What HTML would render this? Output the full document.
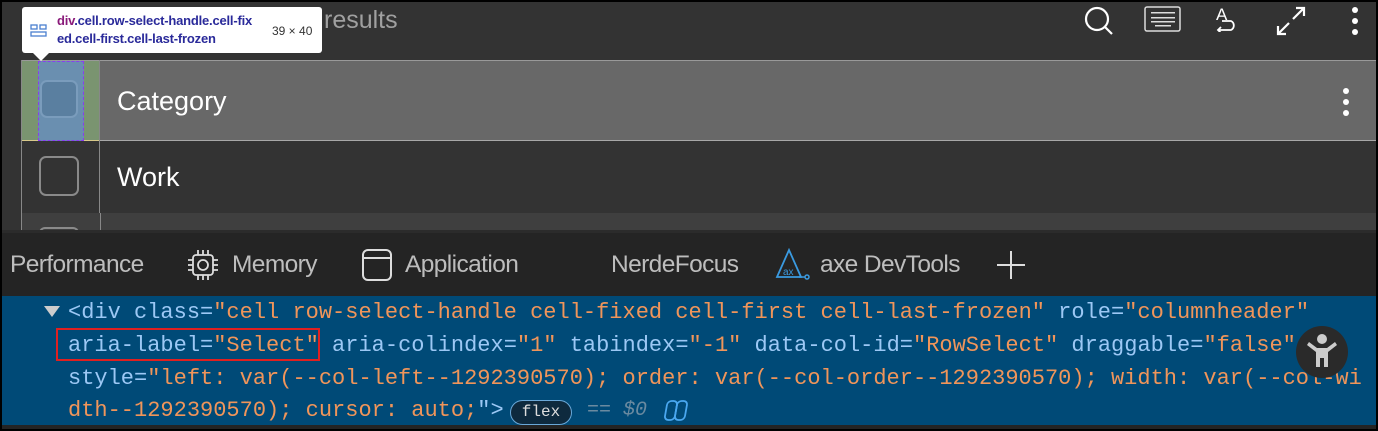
<!DOCTYPE html>
<html><head><meta charset="utf-8"><style>
*{margin:0;padding:0;box-sizing:border-box}
body{width:1378px;height:431px;overflow:hidden;background:#000;font-family:"Liberation Sans",sans-serif;position:relative}
.abs{position:absolute}
.code{font-family:"Liberation Mono",monospace;font-size:22px;color:#9cc8f5;white-space:pre;letter-spacing:0}
.o{color:#f0955a}
.tab{font-size:24.5px;color:#bdbdbd;top:251px;letter-spacing:-0.6px}
</style></head><body>
<div class="abs" style="left:2px;top:2px;width:1374px;height:228px;background:#333"></div>
<div class="abs" style="left:324px;top:6px;font-size:25px;color:#a0a0a0">results</div>
<!-- header row -->
<div class="abs" style="left:21px;top:60px;width:1355px;height:81px;background:#686868;border-top:1px solid #999;border-bottom:1px solid #a8a8a8"></div>
<div class="abs" style="left:21px;top:61px;width:78px;height:80px;background:#7a9470;border-bottom:1px solid #d8c98a"></div>
<div class="abs" style="left:38px;top:61px;width:46px;height:80px;background:#6a8fb0;border:1px dashed #8a3cf0"></div>
<div class="abs" style="left:40px;top:80px;width:38px;height:38px;border-radius:7px;background:#5a7fa0;border:2px solid #7a9cbc"></div>
<div class="abs" style="left:99px;top:60px;width:1px;height:172px;background:#888"></div>
<div class="abs" style="left:21px;top:60px;width:1px;height:172px;background:#888"></div>
<div class="abs" style="left:117px;top:86px;font-size:27px;color:#fff">Category</div>
<div class="abs" style="left:1343px;top:88px;width:6px;height:6px;border-radius:3px;background:#fff;box-shadow:0 11px 0 #fff,0 22px 0 #fff"></div>
<!-- work row -->
<div class="abs" style="left:39px;top:156px;width:40px;height:40px;border-radius:7px;border:2px solid #8a8a8a"></div>
<div class="abs" style="left:117px;top:162px;font-size:27px;color:#fff">Work</div>
<div class="abs" style="left:22px;top:213px;width:1354px;height:17px;background:#3f3f3f"></div>
<div class="abs" style="left:100px;top:213px;width:1px;height:17px;background:#888"></div>
<div class="abs" style="left:39px;top:227px;width:40px;height:6px;border:2px solid #8a8a8a;border-bottom:none;border-radius:7px 7px 0 0"></div>
<!-- top icons -->
<svg class="abs" style="left:1080px;top:3px" width="40" height="34" viewBox="0 0 40 34"><circle cx="17" cy="16" r="11" fill="none" stroke="#fff" stroke-width="2.2"/><line x1="25" y1="24" x2="32" y2="31" stroke="#fff" stroke-width="2.2"/></svg>
<svg class="abs" style="left:1144px;top:6px" width="38" height="27" viewBox="0 0 38 27"><rect x="1" y="1" width="35" height="24" rx="2" fill="none" stroke="#ddd" stroke-width="1.5"/><g fill="#ddd"><rect x="7" y="6" width="24" height="1.5"/><rect x="7" y="11" width="24" height="1.5"/><rect x="7" y="15" width="24" height="1.5"/><rect x="11" y="19" width="16" height="1.5"/></g></svg>
<div class="abs" style="left:1216px;top:5px;font-size:17px;color:#fff">A</div>
<svg class="abs" style="left:1214px;top:18px" width="26" height="14" viewBox="0 0 26 14"><path d="M8 3 H17 A5 5 0 0 1 17 12 H4 M7 9 L4 12 L7 15" fill="none" stroke="#fff" stroke-width="1.8"/></svg>
<svg class="abs" style="left:1275px;top:5px" width="32" height="32" viewBox="0 0 32 32"><path d="M18 14 L29 3 M21 3 H29 V11 M14 18 L3 29 M3 21 V29 H11" fill="none" stroke="#fff" stroke-width="2.2"/></svg>
<div class="abs" style="left:1352px;top:7px;width:6px;height:6px;border-radius:3px;background:#fff;box-shadow:0 11px 0 #fff,0 22px 0 #fff"></div>
<!-- tooltip -->
<div class="abs" style="left:22px;top:7px;width:300px;height:46px;background:#fff;border-radius:3px"></div>
<div class="abs" style="left:33px;top:53px;width:0;height:0;border-left:8px solid transparent;border-right:8px solid transparent;border-top:8px solid #fff"></div>
<svg class="abs" style="left:30px;top:24px" width="18" height="14" viewBox="0 0 18 14"><g fill="none" stroke="#4a7fd0" stroke-width="1.3"><rect x="1" y="1" width="6" height="4"/><rect x="10" y="1" width="6" height="4"/><rect x="1" y="8" width="15" height="4"/></g></svg>
<div class="abs" style="left:57px;top:12px;font-size:13px;font-weight:bold;color:#2a2a9a;line-height:18px;letter-spacing:-0.2px"><span style="color:#8a1a7a">div</span>.cell.row-select-handle.cell-fix<br>ed.cell-first.cell-last-frozen</div>
<div class="abs" style="left:272px;top:24px;font-size:12px;color:#333">39 × 40</div>
<!-- devtools tabbar -->
<div class="abs" style="left:2px;top:230px;width:1374px;height:3px;background:#2b2b2b"></div>
<div class="abs" style="left:2px;top:233px;width:1374px;height:63px;background:#242424"></div>
<div class="abs tab" style="left:10px">Performance</div>
<svg class="abs" style="left:186px;top:248px" width="34" height="34" viewBox="0 0 34 34"><g fill="none" stroke="#ddd" stroke-width="1.8"><rect x="7" y="7" width="20" height="20" rx="3"/><circle cx="17" cy="17" r="5"/><path d="M12 2v5M17 2v5M22 2v5M12 27v5M17 27v5M22 27v5M2 12h5M2 17h5M2 22h5M27 12h5M27 17h5M27 22h5"/></g></svg>
<div class="abs tab" style="left:232px">Memory</div>
<svg class="abs" style="left:361px;top:248px" width="32" height="34" viewBox="0 0 32 34"><rect x="2" y="2" width="28" height="30" rx="5" fill="none" stroke="#ddd" stroke-width="2"/><line x1="2" y1="10" x2="30" y2="10" stroke="#ddd" stroke-width="2"/></svg>
<div class="abs tab" style="left:405px">Application</div>
<div class="abs tab" style="left:611px">NerdeFocus</div>
<svg class="abs" style="left:775px;top:248px" width="40" height="34" viewBox="0 0 40 34"><path d="M14 2 L2 29 H26 Z" fill="none" stroke="#3a9ae0" stroke-width="1.8"/><text x="8" y="27" font-size="10" fill="#3a9ae0" font-family="Liberation Sans">ax</text><path d="M24 29 H30" stroke="#3a9ae0" stroke-width="1.5"/><circle cx="32" cy="29" r="2" fill="none" stroke="#3a9ae0" stroke-width="1.5"/></svg>
<div class="abs tab" style="left:820px">axe DevTools</div>
<div class="abs" style="left:997px;top:264px;width:28px;height:2px;background:#ddd"></div>
<div class="abs" style="left:1010px;top:251px;width:2px;height:28px;background:#ddd"></div>
<!-- code -->
<div class="abs" style="left:2px;top:296px;width:1374px;height:129px;background:#004a77"></div>
<div class="abs" style="left:2px;top:425px;width:1374px;height:4px;background:#242424"></div>
<div class="abs" style="left:44px;top:306px;width:0;height:0;border-left:8px solid transparent;border-right:8px solid transparent;border-top:11px solid #ccc"></div>
<div class="abs code" style="left:68px;top:300px">&lt;div class=<span class="o">"cell row-select-handle cell-fixed cell-first cell-last-frozen"</span> role=<span class="o">"columnheader"</span></div>
<div class="abs code" style="left:68px;top:333px">aria-label=<span class="o">"Select"</span> aria-colindex=<span class="o">"1"</span> tabindex=<span class="o">"-1"</span> data-col-id=<span class="o">"RowSelect"</span> draggable=<span class="o">"false"</span></div>
<div class="abs code" style="left:68px;top:366px">style=<span class="o">"left: var(--col-left--1292390570); order: var(--col-order--1292390570); width: var(--col-wi</span></div>
<div class="abs code" style="left:68px;top:398px"><span class="o">dth--1292390570); cursor: auto;</span>"&gt;</div>
<div class="abs" style="left:56px;top:328px;width:264px;height:33px;border:2px solid #e02020"></div>
<div class="abs" style="left:510px;top:400px;width:62px;height:25px;border-radius:13px;background:#0e2a3e;border:1.5px solid #6aa8d8;color:#ddd;font-family:'Liberation Mono',monospace;font-size:16px;text-align:center;line-height:22px">flex</div>
<div class="abs" style="left:587px;top:399px;font-family:'Liberation Mono',monospace;font-size:20px;color:#6a8aa0;font-style:italic">== $0</div>
<svg class="abs" style="left:664px;top:399px" width="28" height="24" viewBox="0 0 28 24"><g fill="none" stroke="#4aa8f0" stroke-width="1.8"><rect x="4" y="2" width="10" height="19" rx="4" transform="skewX(-10)"/><rect x="14" y="2" width="10" height="19" rx="4" transform="skewX(-10)"/></g></svg>
<div class="abs" style="left:1296px;top:326px;width:52px;height:52px;border-radius:26px;background:#2a2a2a"></div>
<svg class="abs" style="left:1306px;top:332px" width="32" height="40" viewBox="0 0 32 40"><circle cx="16" cy="7" r="5" fill="#ccc"/><path d="M3 10 L11 16 H21 L29 10 L31 13 L22 20 V35 H18 V26 H14 V35 H10 V20 L1 13 Z" fill="#ccc"/></svg>
</body></html>
